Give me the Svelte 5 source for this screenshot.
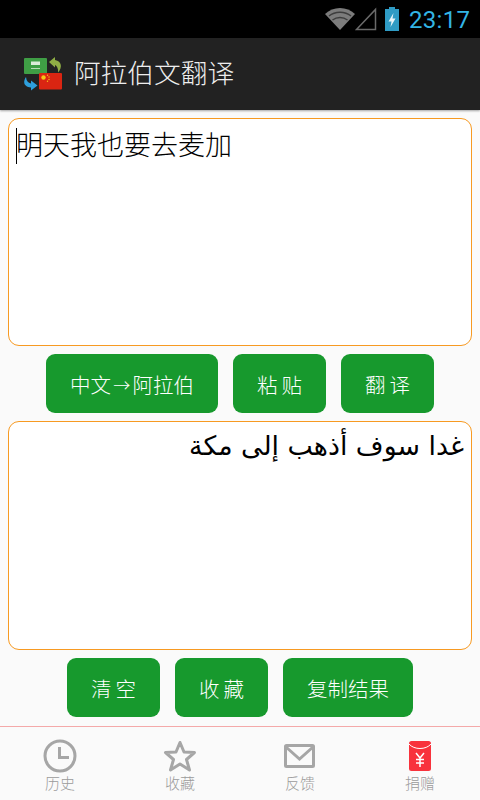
<script lang="ts">
  const tabs = ['历史', '收藏', '反馈', '捐赠'];
</script>

<div class="screen">
  <div class="statusbar">
    <svg class="wifi" width="30" height="24" viewBox="0 0 30 24">
      <path d="M0 7 C8 -1 22 -1 30 7 L15 23 Z" fill="#7c7c7c" />
      <path d="M4 9 C10 4 20 4 26 9 M7.500 13 C12 9.500 18 9.500 22.500 13" fill="none" stroke="#3d3d3d" stroke-width="1.500" />
    </svg>
    <svg class="signal" width="22" height="24" viewBox="0 0 22 24">
      <path d="M20.500 2.500 V22.500 H1.500 Z" fill="none" stroke="#6a6a6a" stroke-width="1.500" />
    </svg>
    <svg class="battery" width="16" height="24" viewBox="0 0 16 24">
      <rect x="5" y="0" width="6" height="3" fill="#2f9bc4" />
      <rect x="1" y="2" width="14" height="22" fill="#2f9bc4" />
      <path d="M9.500 6 L4.500 14.500 H7.500 L6.500 20 L11.500 11.500 H8.500 Z" fill="#e8f4f8" />
    </svg>
    <span class="clock">23:17</span>
  </div>

  <header class="appbar">
    <svg class="logo" width="40" height="34" viewBox="0 0 40 34">
      <rect x="1" y="1" width="23" height="16" rx="1" fill="#3f9e45" />
      <rect x="8" y="4.500" width="9" height="3.500" fill="#dcebd8" />
      <rect x="8" y="11" width="9" height="1" fill="#b9dcb5" />
      <path d="M32 0 L26 5 L32 10.500 L32 8 C34 9 35.500 11.500 35 15.500 C39.500 11 39 4 32 3 Z" fill="#8fae45" />
      <rect x="16" y="16" width="23" height="16.500" rx="1" fill="#da2512" />
      <circle cx="20.500" cy="20.500" r="2.200" fill="#f3c616" />
      <circle cx="24.500" cy="18.300" r="0.700" fill="#f3c616" />
      <circle cx="26" cy="20" r="0.700" fill="#f3c616" />
      <circle cx="26" cy="22.500" r="0.700" fill="#f3c616" />
      <circle cx="24.500" cy="24.300" r="0.700" fill="#f3c616" />
      <path d="M3 20 C-1 26 2 30 8 30.500 L8 33.500 L14.500 28.500 L8 23.500 L8 26.500 C5 26 3.500 24 3 20 Z" fill="#2e9fdc" />
    </svg>
    <span class="title">阿拉伯文翻译</span>
  </header>

  <main class="content">
    <div class="box box-input">
      <span class="caret"></span><span class="input-text">明天我也要去麦加</span>
    </div>
    <div class="actions">
      <button class="btn">中文<span class="arrow">→</span>阿拉伯</button>
      <button class="btn">粘 贴</button>
      <button class="btn">翻 译</button>
    </div>
    <div class="box box-output" dir="rtl">غدا سوف أذهب إلى مكة</div>
    <div class="actions">
      <button class="btn">清 空</button>
      <button class="btn">收 藏</button>
      <button class="btn">复制结果</button>
    </div>
  </main>

  <nav class="tabbar">
    {#each tabs as tab, i}
      <div class="tab">
        {#if i === 0}
          <svg width="34" height="34" viewBox="0 0 34 34" fill="none" stroke="#a6a6a6" stroke-width="3">
            <circle cx="17" cy="17" r="15" />
            <path d="M16.500 8 V18.500 H26" />
          </svg>
        {:else if i === 1}
          <svg width="34" height="34" viewBox="0 0 34 34" fill="none" stroke="#a6a6a6" stroke-width="3" stroke-linejoin="round">
            <path d="M17 3.500 L21 13 L31.500 13.500 L23.500 20.500 L26.500 31 L17 25 L7.500 31 L10.500 20.500 L2.500 13.500 L13 13 Z" />
          </svg>
        {:else if i === 2}
          <svg width="34" height="34" viewBox="0 0 34 34" fill="none" stroke="#a6a6a6" stroke-width="3">
            <rect x="2.500" y="6.500" width="28" height="21" rx="1" />
            <path d="M3 8 L16.500 20 L30 8" />
          </svg>
        {:else}
          <svg width="34" height="34" viewBox="0 0 34 34">
            <rect x="6" y="2" width="22" height="30" rx="2.500" fill="#f8323c" />
            <path d="M6 5 C11 11 23 11 28 5" fill="none" stroke="#fff" stroke-width="1" />
            <path d="M13 14 L17 19 L21 14 M17 19 V28 M13 20.500 H21 M13 24 H21" fill="none" stroke="#fff" stroke-width="1.500" />
          </svg>
        {/if}
        <span class="tab-label">{tab}</span>
      </div>
    {/each}
  </nav>
</div>

<style>
  :global(body) {
    margin: 0;
    background: #fafafa;
  }

  .screen {
    width: 480px;
    height: 800px;
    display: flex;
    flex-direction: column;
    font-family: "Roboto", "Noto Sans CJK SC", sans-serif;
    font-weight: 300;
    overflow: hidden;
  }

  .statusbar {
    height: 38px;
    background: #000;
    display: flex;
    align-items: center;
    justify-content: flex-end;
    flex-shrink: 0;
  }

  .battery { margin-left: 7px; }

  .clock {
    color: #33b5e5;
    font-size: 24px;
    font-weight: 400;
    line-height: 26px;
    padding-top: 2px;
    margin-left: 9px;
    margin-right: 10px;
    width: 61px;
    letter-spacing: 0.3px;
  }

  .appbar {
    height: 72px;
    background: #222;
    display: flex;
    align-items: center;
    padding-left: 23px;
    box-shadow: 0 1px 2px rgba(0, 0, 0, 0.35);
    flex-shrink: 0;
  }

  .logo { margin-right: 11px; }

  .title {
    color: #eee;
    font-size: 26.700px;
    padding-bottom: 5px;
  }

  .content {
    flex: 1;
    display: flex;
    flex-direction: column;
    padding: 8px 8px 0;
    min-height: 0;
  }

  .box {
    background: #fff;
    border: 1px solid #f79a22;
    border-radius: 11px;
    box-sizing: border-box;
    color: #000;
    font-size: 27px;
  }

  .box-input {
    height: 228px;
    padding: 9px 7px;
    display: flex;
    align-items: flex-start;
    line-height: 36px;
  }

  .caret {
    width: 1px;
    height: 36px;
    background: #000;
    margin-right: -1px;
    flex-shrink: 0;
  }

  .box-output {
    height: 229px;
    padding: 4px 7px;
    line-height: 40px;
    font-family: "DejaVu Sans", sans-serif;
    font-size: 26.800px;
    font-weight: 400;
  }

  .actions {
    display: flex;
    justify-content: center;
    gap: 15px;
    padding: 8px 0;
  }

  .btn {
    height: 59px;
    padding: 0 24px;
    border: none;
    border-radius: 9px;
    background: #17992d;
    color: #fff;
    font-family: inherit;
    font-weight: 300;
    font-size: 20.500px;
    word-spacing: -1px;
  }

  .arrow {
    font-family: "Noto Sans CJK SC", sans-serif;
    font-size: 17px;
    margin: 0 2.250px;
    vertical-align: 1px;
  }

  .tabbar {
    height: 74px;
    border-top: 1px solid #f4a9a9;
    display: flex;
    background: #fafafa;
    box-sizing: border-box;
    flex-shrink: 0;
  }

  .tab {
    flex: 1;
    display: flex;
    flex-direction: column;
    align-items: center;
    padding-top: 12px;
  }

  .tab-label {
    color: #9a9a9a;
    font-size: 15px;
    line-height: 20px;
    margin-top: 1px;
  }
</style>
